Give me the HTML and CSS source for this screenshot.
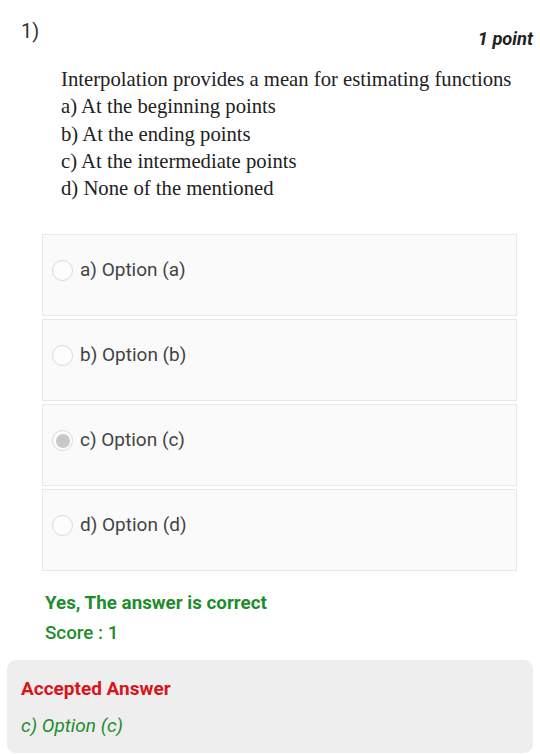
FILE: index.html
```html
<!DOCTYPE html>
<html>
<head>
<meta charset="utf-8">
<link rel="stylesheet" href="styles.css">
</head>
<body>
<div class="page">
  <div class="header">
    <span class="qnum">1)</span>
    <span class="points">1 point</span>
  </div>
  <div class="question">
    <div>Interpolation provides a mean for estimating functions</div>
    <div>a) At the beginning points</div>
    <div>b) At the ending points</div>
    <div>c) At the intermediate points</div>
    <div>d) None of the mentioned</div>
  </div>
  <div class="options">
    <div class="option"><span class="radio"></span><span class="label">a) Option (a)</span></div>
    <div class="option"><span class="radio"></span><span class="label">b) Option (b)</span></div>
    <div class="option"><span class="radio checked"></span><span class="label">c) Option (c)</span></div>
    <div class="option"><span class="radio"></span><span class="label">d) Option (d)</span></div>
  </div>
  <div class="result">
    <div class="correct">Yes, The answer is correct</div>
    <div class="score">Score : 1</div>
  </div>
  <div class="accepted">
    <div class="acc-title">Accepted Answer</div>
    <div class="acc-value">c) Option (c)</div>
  </div>
</div>
</body>
</html>
```
FILE: styles.css
```css
html, body {
  margin: 0;
  padding: 0;
  background: #ffffff;
}
.page {
  width: 540px;
  font-family: Roboto, "Liberation Sans", sans-serif;
}
.header {
  display: flex;
  justify-content: space-between;
  align-items: flex-start;
  padding: 17px 7px 0 21px;
  height: 40px;
}
.qnum {
  font-size: 20px;
  color: #333333;
  line-height: 28px;
}
.points {
  font-size: 18.3px;
  font-weight: 700;
  font-style: italic;
  color: #222222;
  margin-top: 10px;
  line-height: 24px;
}
.question {
  padding: 9px 0 0 61px;
  font-family: "Liberation Serif", "Times New Roman", serif;
  font-size: 20.7px;
  line-height: 27.3px;
  color: #222222;
}
.options {
  margin: 32px 23px 0 42px;
  display: flex;
  flex-direction: column;
  gap: 3px;
}
.option {
  border: 1px solid #e8e8e8;
  background: #fafafa;
  display: flex;
  align-items: flex-start;
  padding: 24px 0 0 9px;
  box-sizing: border-box;
  height: 82px;
}
.radio {
  width: 19px;
  height: 19px;
  border: 1.5px solid #d9d9d9;
  border-radius: 50%;
  background: #fdfdfd;
  margin-top: 1px;
  flex-shrink: 0;
  position: relative;
}
.radio.checked::after {
  content: "";
  position: absolute;
  left: 2.5px;
  top: 2.5px;
  width: 14px;
  height: 14px;
  border-radius: 50%;
  background: #c8c8c8;
}
.label {
  margin-left: 7px;
  font-size: 19px;
  color: #444444;
  line-height: 22px;
}
.result {
  padding: 17px 0 0 45px;
  font-size: 18.8px;
  color: #1e8c2c;
  line-height: 30px;
}
.correct {
  font-weight: 700;
}
.score {
  font-weight: 500;
}
.accepted {
  margin: 12px 7px 0 7px;
  background: #eeeeee;
  border-radius: 9px;
  padding: 16px 14px 14px 14px;
  height: 93px;
  box-sizing: border-box;
}
.acc-title {
  font-size: 19px;
  font-weight: 700;
  color: #d8141c;
  line-height: 26px;
}
.acc-value {
  margin-top: 11px;
  font-size: 19px;
  font-style: italic;
  color: #1e8c2c;
  line-height: 26px;
}
```
